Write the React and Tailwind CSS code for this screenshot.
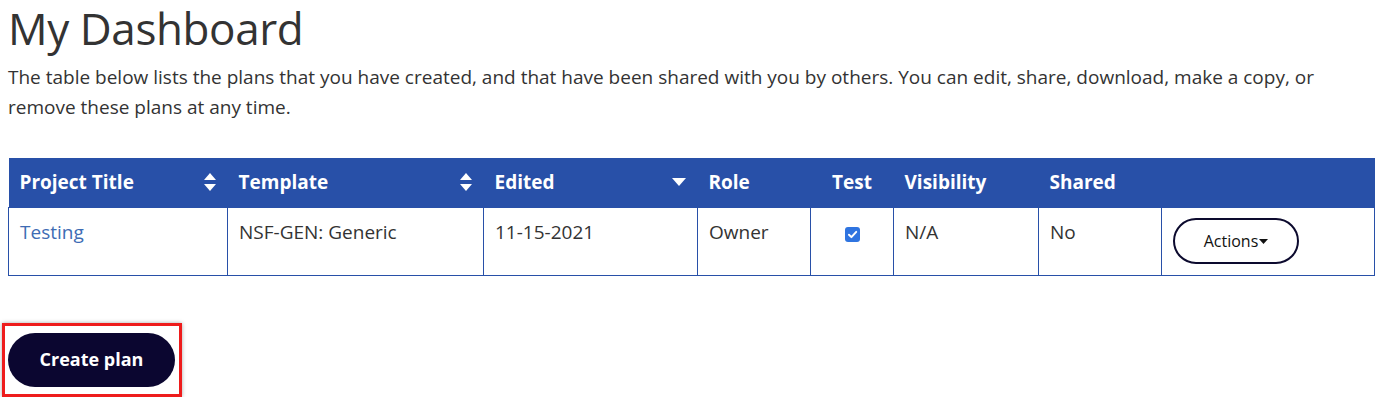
import React from 'react';

const SortBoth = () => (
  <svg width="14" height="22" viewBox="0 0 14 22" className="shrink-0">
    <path d="M7 2 L13 9 H1 Z" fill="white" />
    <path d="M7 20 L13 13 H1 Z" fill="white" />
  </svg>
);

const SortDown = () => (
  <svg width="16" height="10" viewBox="0 0 16 10" className="shrink-0">
    <path d="M1 1 H15 L8 9 Z" fill="white" />
  </svg>
);

const cols = [
  { label: 'Project Title', w: 'w-[219px]', sort: 'both' },
  { label: 'Template', w: 'w-[256px]', sort: 'both' },
  { label: 'Edited', w: 'w-[214px]', sort: 'down' },
  { label: 'Role', w: 'w-[113px]' },
  { label: 'Test', w: 'w-[83px]', center: true },
  { label: 'Visibility', w: 'w-[145px]' },
  { label: 'Shared', w: 'w-[123px]' },
  { label: '', w: 'w-[213px]' },
];

export default function App() {
  return (
    <div className="bg-white px-2 text-[#333] font-['Open_Sans',sans-serif]">
      <h1 className="text-[44px] leading-[54px] font-normal tracking-[-0.4px] pt-[1px]">My Dashboard</h1>
      <p className="text-[19px] leading-[30px] mt-[7px]">
        The table below lists the plans that you have created, and that have been shared with you by others. You can edit, share, download, make a copy, or remove these plans at any time.
      </p>

      <table className="mt-[36px] w-[1366px] table-fixed border-collapse text-[19px]">
        <thead>
          <tr className="bg-[#2850a8] text-white h-[49px]">
            {cols.map((c, i) => (
              <th key={i} className={`${c.w} px-[11px] font-bold text-left`}>
                <div className={`flex items-center ${c.center ? 'justify-center' : 'justify-between'}`}>
                  <span>{c.label}</span>
                  {c.sort === 'both' && <SortBoth />}
                  {c.sort === 'down' && <SortDown />}
                </div>
              </th>
            ))}
          </tr>
        </thead>
        <tbody>
          <tr className="h-[68px] align-top">
            <td className="border border-[#2850a8] px-[11px] pt-[10px]">
              <a href="#" className="text-[#3e6cb4]">Testing</a>
            </td>
            <td className="border border-[#2850a8] px-[11px] pt-[10px]">NSF-GEN: Generic</td>
            <td className="border border-[#2850a8] px-[11px] pt-[10px]">11-15-2021</td>
            <td className="border border-[#2850a8] px-[11px] pt-[10px]">Owner</td>
            <td className="border border-[#2850a8] pt-[16px] text-center leading-none">
              <span className="inline-flex items-center justify-center w-[15px] h-[15px] rounded-[3px] bg-[#2f74e0]">
                <svg width="11" height="11" viewBox="0 0 10 10">
                  <path d="M1.8 5.2 L4 7.4 L8.4 2.6" stroke="white" strokeWidth="1.8" fill="none" strokeLinecap="round" strokeLinejoin="round" />
                </svg>
              </span>
            </td>
            <td className="border border-[#2850a8] px-[11px] pt-[10px]">N/A</td>
            <td className="border border-[#2850a8] px-[11px] pt-[10px]">No</td>
            <td className="border border-[#2850a8] px-[11px] pt-[10px]">
              <button className="w-[126px] h-[46px] rounded-full border-2 border-[#0c0a2e] bg-white text-[16px] text-[#111] font-medium flex items-center justify-center">
                Actions
                <svg width="9" height="6" viewBox="0 0 9 6" className="ml-[1px] mt-[2px]">
                  <path d="M0 0 H9 L4.5 5 Z" fill="#111" />
                </svg>
              </button>
            </td>
          </tr>
        </tbody>
      </table>

      <div className="mt-[47px] -ml-[6px] w-[180px] h-[74px] border-[3px] border-[#ee1c1c] shadow-[0_0_4px_rgba(0,0,0,0.35)] flex items-center pl-[3px]">
        <button className="w-[167px] h-[54px] rounded-full bg-[#0b0630] text-white text-[18px] font-bold">
          Create plan
        </button>
      </div>
    </div>
  );
}
